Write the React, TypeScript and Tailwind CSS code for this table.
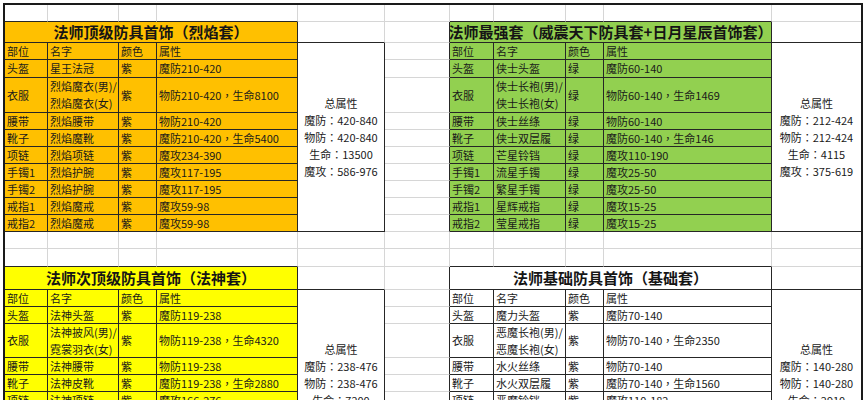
import React from "react";

type Cell = {
  r: number;
  c: number;
  rs?: number;
  cs?: number;
  bg?: string;
  kind?: "title" | "text" | "total" | "empty";
  lines?: string[];
};

const NROWS = 25;
const NCOLS = 11;

type Region = { r0: number; r1: number; c0: number; c1: number };
const regions: Region[] = [
  { r0: 1, r1: 1, c0: 0, c1: 3 },
  { r0: 2, r1: 11, c0: 0, c1: 4 },
  { r0: 1, r1: 1, c0: 6, c1: 9 },
  { r0: 2, r1: 11, c0: 6, c1: 10 },
  { r0: 14, r1: 14, c0: 0, c1: 3 },
  { r0: 15, r1: 24, c0: 0, c1: 4 },
  { r0: 14, r1: 14, c0: 6, c1: 9 },
  { r0: 15, r1: 24, c0: 6, c1: 10 },
];
const inTable = (r: number, c: number) =>
  regions.some((g) => r >= g.r0 && r <= g.r1 && c >= g.c0 && c <= g.c1);

type Spec = {
  title: string;
  bg: string;
  rows: [string, string[], string, string][];
  totals: string[];
};

const tl: Spec = {
  title: "法师顶级防具首饰（烈焰套）",
  bg: "bg-[#ffc000]",
  rows: [
    ["部位", ["名字"], "颜色", "属性"],
    ["头盔", ["星王法冠"], "紫", "魔防210-420"],
    ["衣服", ["烈焰魔衣(男)/", "烈焰魔衣(女)"], "紫", "物防210-420，生命8100"],
    ["腰带", ["烈焰腰带"], "紫", "物防210-420"],
    ["靴子", ["烈焰魔靴"], "紫", "魔防210-420，生命5400"],
    ["项链", ["烈焰项链"], "紫", "魔攻234-390"],
    ["手镯1", ["烈焰护腕"], "紫", "魔攻117-195"],
    ["手镯2", ["烈焰护腕"], "紫", "魔攻117-195"],
    ["戒指1", ["烈焰魔戒"], "紫", "魔攻59-98"],
    ["戒指2", ["烈焰魔戒"], "紫", "魔攻59-98"],
  ],
  totals: ["总属性", "魔防：420-840", "物防：420-840", "生命：13500", "魔攻：586-976"],
};

const tr: Spec = {
  title: "法师最强套（威震天下防具套+日月星辰首饰套）",
  bg: "bg-[#92d050]",
  rows: [
    ["部位", ["名字"], "颜色", "属性"],
    ["头盔", ["侠士头盔"], "绿", "魔防60-140"],
    ["衣服", ["侠士长袍(男)/", "侠士长袍(女)"], "绿", "物防60-140，生命1469"],
    ["腰带", ["侠士丝绦"], "绿", "物防60-140"],
    ["靴子", ["侠士双层履"], "绿", "魔防60-140，生命146"],
    ["项链", ["芒星铃铛"], "绿", "魔攻110-190"],
    ["手镯1", ["流星手镯"], "绿", "魔攻25-50"],
    ["手镯2", ["繁星手镯"], "绿", "魔攻25-50"],
    ["戒指1", ["星辉戒指"], "绿", "魔攻15-25"],
    ["戒指2", ["莹星戒指"], "绿", "魔攻15-25"],
  ],
  totals: ["总属性", "魔防：212-424", "物防：212-424", "生命：4115", "魔攻：375-619"],
};

const bl: Spec = {
  title: "法师次顶级防具首饰（法神套）",
  bg: "bg-[#ffff00]",
  rows: [
    ["部位", ["名字"], "颜色", "属性"],
    ["头盔", ["法神头盔"], "紫", "魔防119-238"],
    ["衣服", ["法神披风(男)/", "霓裳羽衣(女)"], "紫", "物防119-238，生命4320"],
    ["腰带", ["法神腰带"], "紫", "物防119-238"],
    ["靴子", ["法神皮靴"], "紫", "魔防119-238，生命2880"],
    ["项链", ["法神项链"], "紫", "魔攻166-276"],
    ["手镯1", ["法神手镯"], "紫", "魔攻83-138"],
    ["手镯2", ["法神手镯"], "紫", "魔攻83-138"],
    ["戒指1", ["法神戒指"], "紫", "魔攻42-69"],
    ["戒指2", ["法神戒指"], "紫", "魔攻42-69"],
  ],
  totals: ["总属性", "魔防：238-476", "物防：238-476", "生命：7200", "魔攻：374-621"],
};

const br: Spec = {
  title: "法师基础防具首饰（基础套）",
  bg: "bg-white",
  rows: [
    ["部位", ["名字"], "颜色", "属性"],
    ["头盔", ["魔力头盔"], "紫", "魔防70-140"],
    ["衣服", ["恶魔长袍(男)/", "恶魔长袍(女)"], "紫", "物防70-140，生命2350"],
    ["腰带", ["水火丝绦"], "紫", "物防70-140"],
    ["靴子", ["水火双层履"], "紫", "魔防70-140，生命1560"],
    ["项链", ["恶魔铃铛"], "紫", "魔攻110-182"],
    ["手镯1", ["恶魔手镯"], "紫", "魔攻55-91"],
    ["手镯2", ["恶魔手镯"], "紫", "魔攻55-91"],
    ["戒指1", ["恶魔戒指"], "紫", "魔攻28-46"],
    ["戒指2", ["恶魔戒指"], "紫", "魔攻28-46"],
  ],
  totals: ["总属性", "魔防：140-280", "物防：140-280", "生命：2910", "魔攻：221-365"],
};

function addTable(cells: Cell[], s: Spec, r0: number, c0: number) {
  cells.push({ r: r0, c: c0, cs: 4, bg: s.bg, kind: "title", lines: [s.title] });
  s.rows.forEach((row, i) => {
    const r = r0 + 1 + i;
    cells.push({ r, c: c0, bg: s.bg, kind: "text", lines: [row[0]] });
    cells.push({ r, c: c0 + 1, bg: s.bg, kind: "text", lines: row[1] });
    cells.push({ r, c: c0 + 2, bg: s.bg, kind: "text", lines: [row[2]] });
    cells.push({ r, c: c0 + 3, bg: s.bg, kind: "text", lines: [row[3]] });
  });
  cells.push({ r: r0 + 1, c: c0 + 4, rs: 10, bg: "bg-white", kind: "total", lines: s.totals });
}

const cells: Cell[] = [];
addTable(cells, tl, 1, 0);
addTable(cells, tr, 1, 6);
addTable(cells, bl, 14, 0);
addTable(cells, br, 14, 6);

function buildGrid(): Cell[] {
  const start: (Cell | null)[][] = Array.from({ length: NROWS }, () => Array(NCOLS).fill(null));
  const covered: boolean[][] = Array.from({ length: NROWS }, () => Array(NCOLS).fill(false));
  cells.forEach((cell) => {
    start[cell.r][cell.c] = cell;
    const rs = cell.rs ?? 1;
    const cs = cell.cs ?? 1;
    for (let i = 0; i < rs; i++)
      for (let j = 0; j < cs; j++) if (cell.r + i < NROWS) covered[cell.r + i][cell.c + j] = true;
  });
  const out: Cell[] = [];
  for (let r = 0; r < NROWS; r++)
    for (let c = 0; c < NCOLS; c++) {
      const s = start[r][c];
      if (s) out.push(s);
      else if (!covered[r][c]) out.push({ r, c, kind: "empty", bg: "bg-white" });
    }
  return out;
}

// Render full-width punctuation centred, as the reference's font does
function Punct({ text }: { text: string }) {
  const parts = text.split(/([：，])/);
  return (
    <>
      {parts.map((p, i) =>
        p === "：" || p === "，" ? (
          <span key={i} className="font-['Noto_Sans_CJK_TC',sans-serif]">
            {p}
          </span>
        ) : (
          <React.Fragment key={i}>{p}</React.Fragment>
        )
      )}
    </>
  );
}

function CellView({ cell }: { cell: Cell }) {
  const rs = cell.rs ?? 1;
  const cs = cell.cs ?? 1;
  const rEnd = cell.r + rs - 1;
  const cEnd = cell.c + cs - 1;
  const self = inTable(cell.r, cell.c);
  const darkR = self || inTable(cell.r, cEnd + 1);
  const darkB = self || (rEnd + 1 < NROWS && inTable(rEnd + 1, cell.c));
  const last = cEnd === NCOLS - 1;
  const rCls = last ? "border-r-0" : darkR ? "border-r border-r-[#262626]" : "border-r border-r-[#d6d6d6]";
  const bCls = darkB ? "border-b border-b-[#262626]" : "border-b border-b-[#d6d6d6]";
  const span = cs === 4 ? "col-span-4" : rs === 10 ? "row-span-10" : "";
  const base = `${span} ${cell.bg ?? ""} ${rCls} ${bCls} overflow-hidden`;

  if (cell.kind === "title") {
    return (
      <div className={`${base} flex items-center justify-center text-[15px] font-bold text-[#151515] whitespace-nowrap`}>
        {cell.lines?.[0]}
      </div>
    );
  }
  if (cell.kind === "total") {
    return (
      <div className={`${base} flex flex-col items-center justify-center text-[11px] leading-[17px] text-[#1a1a1a] whitespace-nowrap`}>
        {cell.lines?.map((l, i) => (
          <div key={i}>
            <Punct text={l} />
          </div>
        ))}
      </div>
    );
  }
  if (cell.kind === "text") {
    return (
      <div className={`${base} flex flex-col justify-center pl-[2px] text-[11px] leading-[17px] text-[#1a1a1a] whitespace-nowrap`}>
        {cell.lines?.map((l, i) => (
          <div key={i}>
            <Punct text={l} />
          </div>
        ))}
      </div>
    );
  }
  return <div className={base} />;
}

export default function App() {
  const grid = buildGrid();
  return (
    <div className="w-[863px] h-[400px] overflow-hidden bg-white pt-[3px] pl-[3px] font-['Noto_Sans_CJK_SC','Microsoft_YaHei',sans-serif]">
      <div className="grid grid-cols-[43px_71px_38px_141px_87px_65px_44px_72px_38px_168px_89px] grid-rows-[17px_21px_17px_18px_35px_17px_17px_17px_17px_17px_17px_17px_17px_18px_23px_17px_17px_34px_17px_17px_17px_17px_17px_17px_17px] border-t-2 border-l-2 border-r-2 border-[#1a1a1a] w-[860px]">
        {grid.map((cell) => (
          <CellView key={`${cell.r}-${cell.c}`} cell={cell} />
        ))}
      </div>
    </div>
  );
}
